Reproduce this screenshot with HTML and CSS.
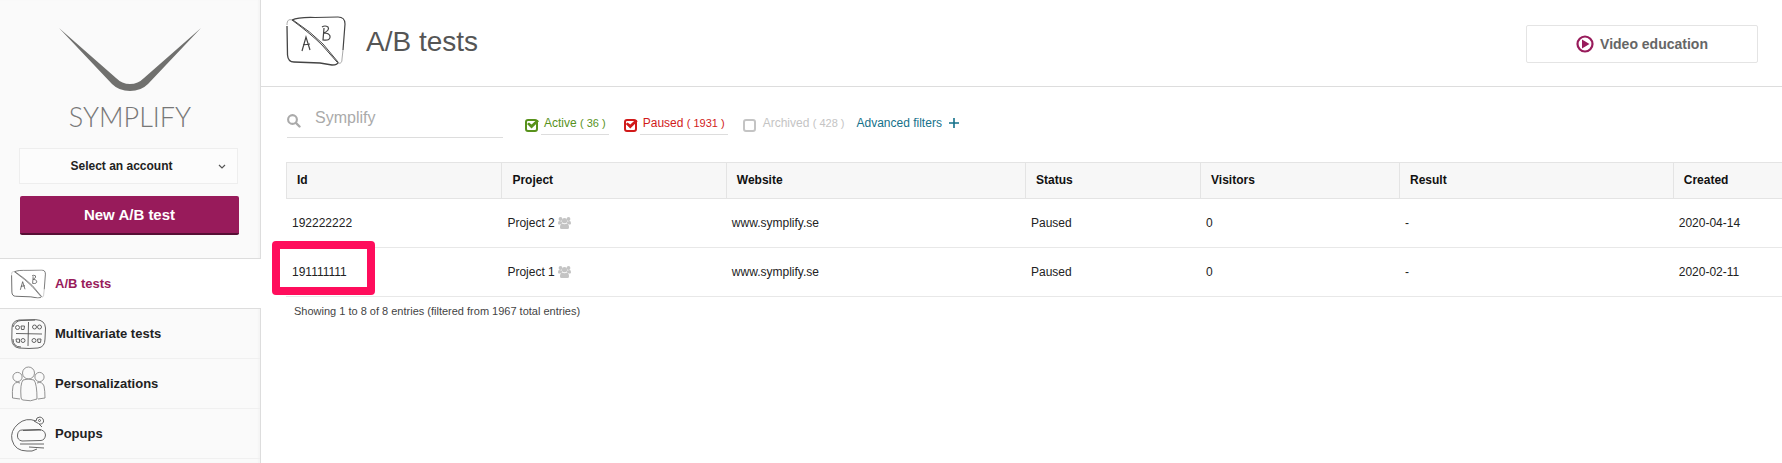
FILE: index.html
```
<!DOCTYPE html>
<html lang="en">
<head>
  <meta charset="UTF-8">
  <meta name="viewport" content="width=device-width, initial-scale=1.0">
  <title>A/B tests</title>
  <link rel="stylesheet" href="styles.css">
</head>
<body>
  <!-- Shared icons -->
  <svg class="sprite" aria-hidden="true">
    <symbol id="icon-ab" viewBox="0 0 60 50">
      <path d="M1 9C1 4 3 3 6 4M52 47C55 48 56 46 56 43L57 34" fill="none" stroke="#aaa" stroke-width="1"/>
      <path d="M6 4Q12 1 29 1.500L52 1Q59 1 59 8L57 34" fill="none" stroke="#444" stroke-width="1.200"/>
      <path d="M1 10L1.500 39Q2 46 8 46L34 47L46 49Q52 49 52 46" fill="none" stroke="#444" stroke-width="1.300"/>
      <path d="M6 4Q25 18 36 29L51 46M7 4Q25 16 37 28L52 46" fill="none" stroke="#444" stroke-width="1"/>
      <path d="M16 35L20 21L24 34M17 29L24 28" fill="none" stroke="#444" stroke-width="1.200"/>
      <path d="M38 12L37 24Q45 25 44 20Q43 17 38 17Q44 14 42 11Q39 9 36 11" fill="none" stroke="#444" stroke-width="1.200"/>
    </symbol>
    <symbol id="icon-group" viewBox="0 0 13 12">
      <circle cx="2.500" cy="2" r="1.900"/>
      <circle cx="10.500" cy="2" r="1.900"/>
      <path d="M0 6.500Q0 4 1 4L4 4.500L4 6.500L2 7.500L1 7.500Q0 7.500 0 6.500ZM13 6.500Q13 4 12 4L9 4.500L9 6.500L11 7.500L12 7.500Q13 7.500 13 6.500Z"/>
      <circle cx="6.500" cy="3.700" r="2.600"/>
      <path d="M4 6.500Q6.500 8 9 6.500Q11 7 11 10.500Q11 12 9.500 12L3.500 12Q2 12 2 10.500Q2 7 4 6.500Z"/>
    </symbol>
  </svg>

  <div class="layout">
    <aside class="sidebar">
      <div class="logo">
        <svg class="logo-mark" viewBox="0 0 142 64" aria-hidden="true">
          <path d="M0 0L57 50Q63 56 71 56Q79 56 85 50L142 0L89 56Q82 63 71 63Q60 63 53 56Z" fill="#70706e"/>
        </svg>
        <span class="logo-text">SYMPLIFY</span>
      </div>

      <div class="account">
        <select class="account-select" aria-label="Account">
          <option>Select an account</option>
        </select>
        <svg class="account-arrow" viewBox="0 0 8 6" aria-hidden="true"><path d="M1 1L4 4L7 1" fill="none" stroke="#555" stroke-width="1.200"/></svg>
      </div>
      <button class="new-test" type="button">New A/B test</button>

      <nav class="menu">
        <a class="menu-item active" href="#">
          <svg class="menu-icon" viewBox="0 0 60 50" aria-hidden="true"><use href="#icon-ab"/></svg>
          A/B tests
        </a>
        <a class="menu-item" href="#">
          <svg class="menu-icon" viewBox="0 0 35 30" fill="none" stroke="#555" stroke-width="0.900" aria-hidden="true">
            <path d="M8 1L25 0.700Q34 1 34.500 9L34 20Q34 28 27 29L18 29.500L8 29Q1 28 0.800 20L1 9Q1 2 8 1Z"/>
            <path d="M2 8Q4 2 10 1.500L24 1M2 20Q2 28 10 28"/>
            <path d="M17.500 3L17 27M5 14.500L31 15"/>
            <circle cx="6.500" cy="8.500" r="2"/><path d="M10 7L13.500 7L13 10.500L10.500 10.500Z"/>
            <circle cx="23.500" cy="8" r="2"/><circle cx="28.500" cy="8" r="2"/>
            <path d="M5 20L8.500 20L8.500 23.500L5.500 23Z"/><circle cx="12" cy="21.500" r="2"/>
            <circle cx="23" cy="21.500" r="2"/><path d="M26.500 20L30 20L29.500 23.500L27 23.500Z"/>
          </svg>
          Multivariate tests
        </a>
        <a class="menu-item" href="#">
          <svg class="menu-icon tall" viewBox="0 0 35 36" fill="none" stroke="#777" stroke-width="0.800" aria-hidden="true">
            <circle cx="17.500" cy="7" r="6"/>
            <circle cx="6.500" cy="11" r="4.600"/><circle cx="28.500" cy="11" r="4.600"/>
            <path d="M12 14Q17 12 23 14Q26 18 26 33Q20 36 12 34Q10 34 10 31Q9 18 12 14Z"/>
            <path d="M9 17Q4 15 2 20Q1 25 1.500 32L9 33M26 17Q31 15 33 20Q34 25 34 32L27 33"/>
          </svg>
          Personalizations
        </a>
        <a class="menu-item" href="#">
          <svg class="menu-icon tall" viewBox="0 0 35 36" fill="none" stroke="#555" stroke-width="0.900" aria-hidden="true">
            <path d="M25 5Q15 1 7 8Q-1 15 1 24Q4 35 16 35Q21 36 26 33M23 5Q28 7 31 11"/>
            <path d="M25 5Q25 1 29 1Q33 2 32.500 6Q31 9 28 8"/>
            <circle cx="28.500" cy="4.500" r="1"/>
            <path d="M11 14L28 13.500Q34 14 34.500 19Q34 24 30 24.500L11 25Q6 24 6.500 19Q7 14 11 14ZM12 14.500L30 14"/>
            <path d="M9 28L33 28M18 31L33 32"/>
          </svg>
          Popups
        </a>
      </nav>
    </aside>

    <main class="content">
      <header class="page-header">
        <svg class="title-icon" viewBox="0 0 60 50" aria-hidden="true"><use href="#icon-ab"/></svg>
        <h1>A/B tests</h1>
        <a class="video-link" href="#">
          <svg class="video-icon" viewBox="0 0 18 18" aria-hidden="true">
            <circle cx="9" cy="9" r="7.500" fill="none" stroke="#981b5b" stroke-width="2.200"/>
            <path d="M6 4.500L13.500 9L6 13.500Z" fill="#981b5b"/>
          </svg>
          Video education
        </a>
      </header>

      <div class="filters">
        <div class="search">
          <svg class="search-icon" viewBox="0 0 14 14" aria-hidden="true"><circle cx="5.500" cy="5.500" r="4.400" fill="none" stroke="#aaa" stroke-width="2.100"/><path d="M9 9L12.500 12.500" stroke="#aaa" stroke-width="2.400" stroke-linecap="round"/></svg>
          <input class="search-input" type="text" placeholder="Symplify" aria-label="Search">
        </div>
        <label class="filter filter-active"><input type="checkbox" checked><span class="filter-name">Active <small>( 36 )</small></span></label>
        <label class="filter filter-paused"><input type="checkbox" checked><span class="filter-name">Paused <small>( 1931 )</small></span></label>
        <label class="filter filter-archived"><input type="checkbox"><span class="filter-name">Archived <small>( 428 )</small></span></label>
        <a class="advanced" href="#">Advanced filters
          <svg class="plus" viewBox="0 0 10 10" aria-hidden="true"><path d="M5 0V10M0 5H10" stroke="#15718a" stroke-width="1.600"/></svg>
        </a>
      </div>

      <table class="tests">
        <colgroup>
          <col class="col-id">
          <col class="col-project">
          <col class="col-website">
          <col class="col-status">
          <col class="col-visitors">
          <col class="col-result">
          <col class="col-created">
        </colgroup>
        <thead>
          <tr>
            <th>Id</th>
            <th>Project</th>
            <th>Website</th>
            <th>Status</th>
            <th>Visitors</th>
            <th>Result</th>
            <th>Created</th>
          </tr>
        </thead>
        <tbody>
          <tr>
            <td>192222222</td>
            <td>Project 2 <svg class="group-icon" viewBox="0 0 13 12" aria-hidden="true"><use href="#icon-group"/></svg></td>
            <td>www.symplify.se</td>
            <td>Paused</td>
            <td>0</td>
            <td>-</td>
            <td>2020-04-14</td>
          </tr>
          <tr>
            <td class="marked">191111111<span class="marker"></span></td>
            <td>Project 1 <svg class="group-icon" viewBox="0 0 13 12" aria-hidden="true"><use href="#icon-group"/></svg></td>
            <td>www.symplify.se</td>
            <td>Paused</td>
            <td>0</td>
            <td>-</td>
            <td>2020-02-11</td>
          </tr>
        </tbody>
      </table>
      <p class="table-info">Showing 1 to 8 of 8 entries (filtered from 1967 total entries)</p>
    </main>
  </div>
</body>
</html>
```
FILE: styles.css
```
* {
  box-sizing: border-box;
}
body {
  margin: 0;
  font-family: "Liberation Sans", Arial, sans-serif;
  font-size: 12px;
  line-height: 16px;
  color: #222;
  background-color: #fff;
}
a {
  text-decoration: none;
}
.sprite {
  position: absolute;
  width: 0;
  height: 0;
}
.layout {
  display: flex;
  min-height: 100vh;
}

/* Sidebar */
.sidebar {
  flex: 0 0 261px;
  background-color: #fafafa;
  border-right: 1px solid #ddd;
  box-shadow: inset -2px 0 1px #f5f5f5;
}
.logo {
  display: flex;
  flex-direction: column;
  align-items: center;
  padding-top: 28px;
}
.logo-mark {
  width: 142px;
  height: 64px;
}
.logo-text {
  margin-top: 8px;
  font-family: Lato, sans-serif;
  font-size: 27px;
  font-weight: 300;
  line-height: 34px;
  color: #777;
}
.account {
  position: relative;
  margin: 14px 22px 0 19px;
}
.account-select {
  display: block;
  width: 100%;
  height: 36px;
  padding: 0 14px 0 0;
  appearance: none;
  background-color: #fcfcfc;
  border: 1px solid #eee;
  border-radius: 0;
  font: bold 12px "Liberation Sans", Arial, sans-serif;
  color: #222;
  text-align: center;
  text-align-last: center;
}
.account-arrow {
  position: absolute;
  top: 16px;
  right: 12px;
  width: 8px;
  height: 6px;
  pointer-events: none;
}
.new-test {
  display: block;
  width: 219px;
  height: 39px;
  margin: 12px 0 0 20px;
  padding: 0;
  background-color: #981b5b;
  border: none;
  border-bottom: 2px solid #560f34;
  border-radius: 2px;
  font: bold 15px "Liberation Sans", Arial, sans-serif;
  color: #fff;
  cursor: pointer;
}
.menu {
  margin-top: 23px;
}
.menu-item {
  display: flex;
  align-items: center;
  gap: 9px;
  height: 50px;
  padding-left: 11px;
  border-bottom: 1px solid #f0f0f0;
  font-size: 13px;
  font-weight: bold;
  color: #222;
}
.menu-item.active {
  height: 51px;
  margin-right: -1px;
  background-color: #fff;
  border-top: 1px solid #ddd;
  border-bottom-color: #ddd;
  color: #981b5b;
}
.menu-icon {
  width: 35px;
  height: 30px;
}
.menu-icon.tall {
  height: 36px;
}

/* Page header */
.content {
  flex: 1;
  min-width: 0;
}
.page-header {
  display: flex;
  align-items: center;
  height: 87px;
  padding: 2px 24px 0 25px;
  border-bottom: 1px solid #ddd;
}
.title-icon {
  width: 60px;
  height: 50px;
  margin-bottom: 6px;
}
h1 {
  margin: 0 0 4px 20px;
  font-size: 28px;
  font-weight: normal;
  line-height: 32px;
  color: #555;
}
.video-link {
  display: flex;
  align-items: center;
  justify-content: center;
  gap: 6px;
  width: 232px;
  height: 38px;
  margin-left: auto;
  border: 1px solid #e4e4e4;
  border-radius: 2px;
  font-size: 14px;
  font-weight: bold;
  color: #666;
}
.video-icon {
  width: 18px;
  height: 18px;
}

/* Filters */
.filters {
  display: flex;
  align-items: flex-end;
  height: 51px;
  padding-left: 26px;
}
.search {
  display: flex;
  align-items: center;
  width: 216px;
  height: 40px;
  margin-right: 22px;
  border-bottom: 1px solid #ddd;
}
.search-icon {
  width: 14px;
  height: 14px;
  margin-top: 6px;
}
.search-input {
  flex: 1;
  min-width: 0;
  margin-left: 14px;
  padding: 0;
  background: none;
  border: none;
  outline: none;
  font: 16px "Liberation Sans", Arial, sans-serif;
}
.search-input::placeholder {
  color: #aaa;
}
.filter {
  display: flex;
  align-items: center;
  gap: 3px;
  margin: 0 15px 3px 0;
}
.filter input {
  position: relative;
  width: 13px;
  height: 13px;
  margin: 0;
  appearance: none;
  border: 2px solid;
  border-radius: 3px;
  color: inherit;
}
.filter input:checked::before {
  content: "";
  position: absolute;
  top: -1px;
  left: 0;
  width: 12px;
  height: 9px;
  background-color: currentColor;
  clip-path: polygon(0 50%, 16% 32%, 38% 55%, 84% 0, 100% 20%, 38% 100%);
}
.filter-name {
  padding: 0 3px 3px;
  border-bottom: 1px solid #ddd;
}
.filter small {
  font-size: 11px;
}
.filter-active {
  color: #58921c;
}
.filter-paused {
  color: #d11a1a;
}
.filter-archived {
  gap: 4px;
  margin-right: 9px;
  color: #c4c4c4;
}
.filter-archived .filter-name {
  border-color: transparent;
}
.advanced {
  display: flex;
  align-items: center;
  gap: 7px;
  margin-bottom: 7px;
  color: #15718a;
}
.plus {
  width: 10px;
  height: 10px;
}

/* Table */
.tests {
  width: calc(100% - 25px);
  margin: 24px 0 0 25px;
  border-collapse: separate;
  border-spacing: 0;
  table-layout: fixed;
}
.col-id { width: 14.4%; }
.col-project { width: 15%; }
.col-website { width: 20%; }
.col-status { width: 11.7%; }
.col-visitors { width: 13.3%; }
.col-result { width: 18.3%; }
.col-created { width: 7.3%; }
th {
  height: 37px;
  padding: 0 10px 2px;
  background-color: #f7f7f7;
  border: 1px solid #e4e4e4;
  border-right: none;
  text-align: left;
  color: #111;
}
td {
  height: 49px;
  padding: 0 6px 1px;
  border-bottom: 1px solid #e8e8e8;
}
.group-icon {
  width: 13px;
  height: 12px;
  fill: #c4c4c4;
  vertical-align: -2px;
}
.marked {
  position: relative;
}
.marker {
  position: absolute;
  top: -7px;
  left: -14px;
  width: 103px;
  height: 54px;
  border: 8px solid #ff0d5c;
  border-radius: 4px;
}
.table-info {
  margin: 6px 0 0 33px;
  font-size: 11px;
  color: #444;
}
```
